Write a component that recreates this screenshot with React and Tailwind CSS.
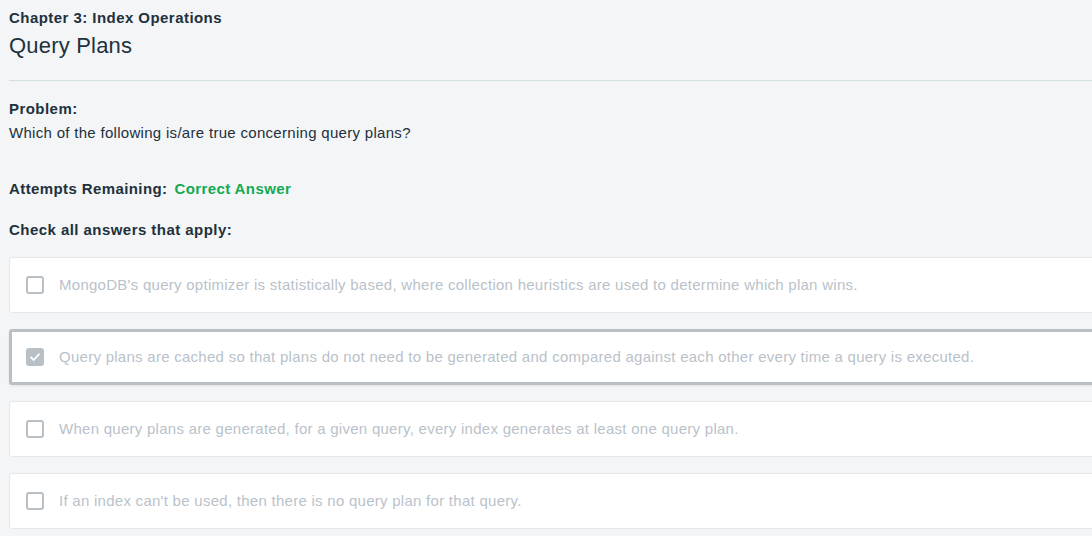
import React from 'react';

const ANSWERS = [
    { id: 1, text: "MongoDB's query optimizer is statistically based, where collection heuristics are used to determine which plan wins.", checked: false },
    { id: 2, text: 'Query plans are cached so that plans do not need to be generated and compared against each other every time a query is executed.', checked: true },
    { id: 3, text: 'When query plans are generated, for a given query, every index generates at least one query plan.', checked: false },
    { id: 4, text: "If an index can't be used, then there is no query plan for that query.", checked: false },
];

function Checkbox({ checked }) {
    if (checked) {
        return (
            <span className="w-[18px] h-[18px] rounded-[3px] bg-[#b8c0c5] flex items-center justify-center shrink-0">
                <svg width="12" height="12" viewBox="0 0 12 12" fill="none">
                    <path d="M2 6.3 L4.8 9 L10 3.2" stroke="#fff" strokeWidth="1.8" strokeLinecap="round" strokeLinejoin="round" />
                </svg>
            </span>
        );
    }
    return <span className="w-[18px] h-[18px] rounded-[3px] border-2 border-[#b8c0c5] bg-white shrink-0" />;
}

export default function App() {
    return (
        <div className="min-h-screen bg-[#f4f5f7] pl-[9px] overflow-hidden text-[#21313c]" style={{ fontFamily: '"Liberation Sans", Arial, sans-serif' }}>
            {/* Header */}
            <div className="pt-[9px]">
                <div className="text-[15px] font-bold leading-[17px] tracking-[0.45px]">Chapter 3: Index Operations</div>
                <div className="text-[22px] leading-[26px] mt-[7px] tracking-[0.2px]">Query Plans</div>
            </div>
            <div className="h-px bg-[#cfe0e3] mt-[21px]" />

            {/* Problem */}
            <div className="mt-[19px] text-[15px] font-bold leading-[17px] tracking-[0.45px]">Problem:</div>
            <div className="mt-[7px] text-[15px] leading-[17px] tracking-[0.3px]">Which of the following is/are true concerning query plans?</div>

            <div className="mt-[39px] flex items-center text-[15px] font-bold leading-[17px] tracking-[0.4px]">
                <span>Attempts Remaining:</span>
                <span className="ml-[7px] text-[#13aa52]">Correct Answer</span>
            </div>

            <div className="mt-[24px] text-[15px] font-bold leading-[17px] tracking-[0.45px]">Check all answers that apply:</div>

            {/* Answers */}
            <div className="mt-[19px] flex flex-col gap-[16px] w-[1100px]">
                {ANSWERS.map((a) => (
                    <div
                        key={a.id}
                        className={
                            a.checked
                                ? 'h-[56px] bg-white border-[3px] border-[#b8c0c5] rounded-[3px] flex items-center pl-[14px] shadow-[0_1px_3px_rgba(0,0,0,0.08)]'
                                : 'h-[56px] bg-white border border-[#e4e8eb] rounded-[3px] flex items-center pl-[16px]'
                        }
                    >
                        <Checkbox checked={a.checked} />
                        <span className={a.checked ? 'ml-[15px] text-[15px] tracking-[0.27px] text-[#b9c2ca]' : 'ml-[15px] text-[15px] tracking-[0.27px] text-[#b9c2ca]'}>{a.text}</span>
                    </div>
                ))}
            </div>
        </div>
    );
}
